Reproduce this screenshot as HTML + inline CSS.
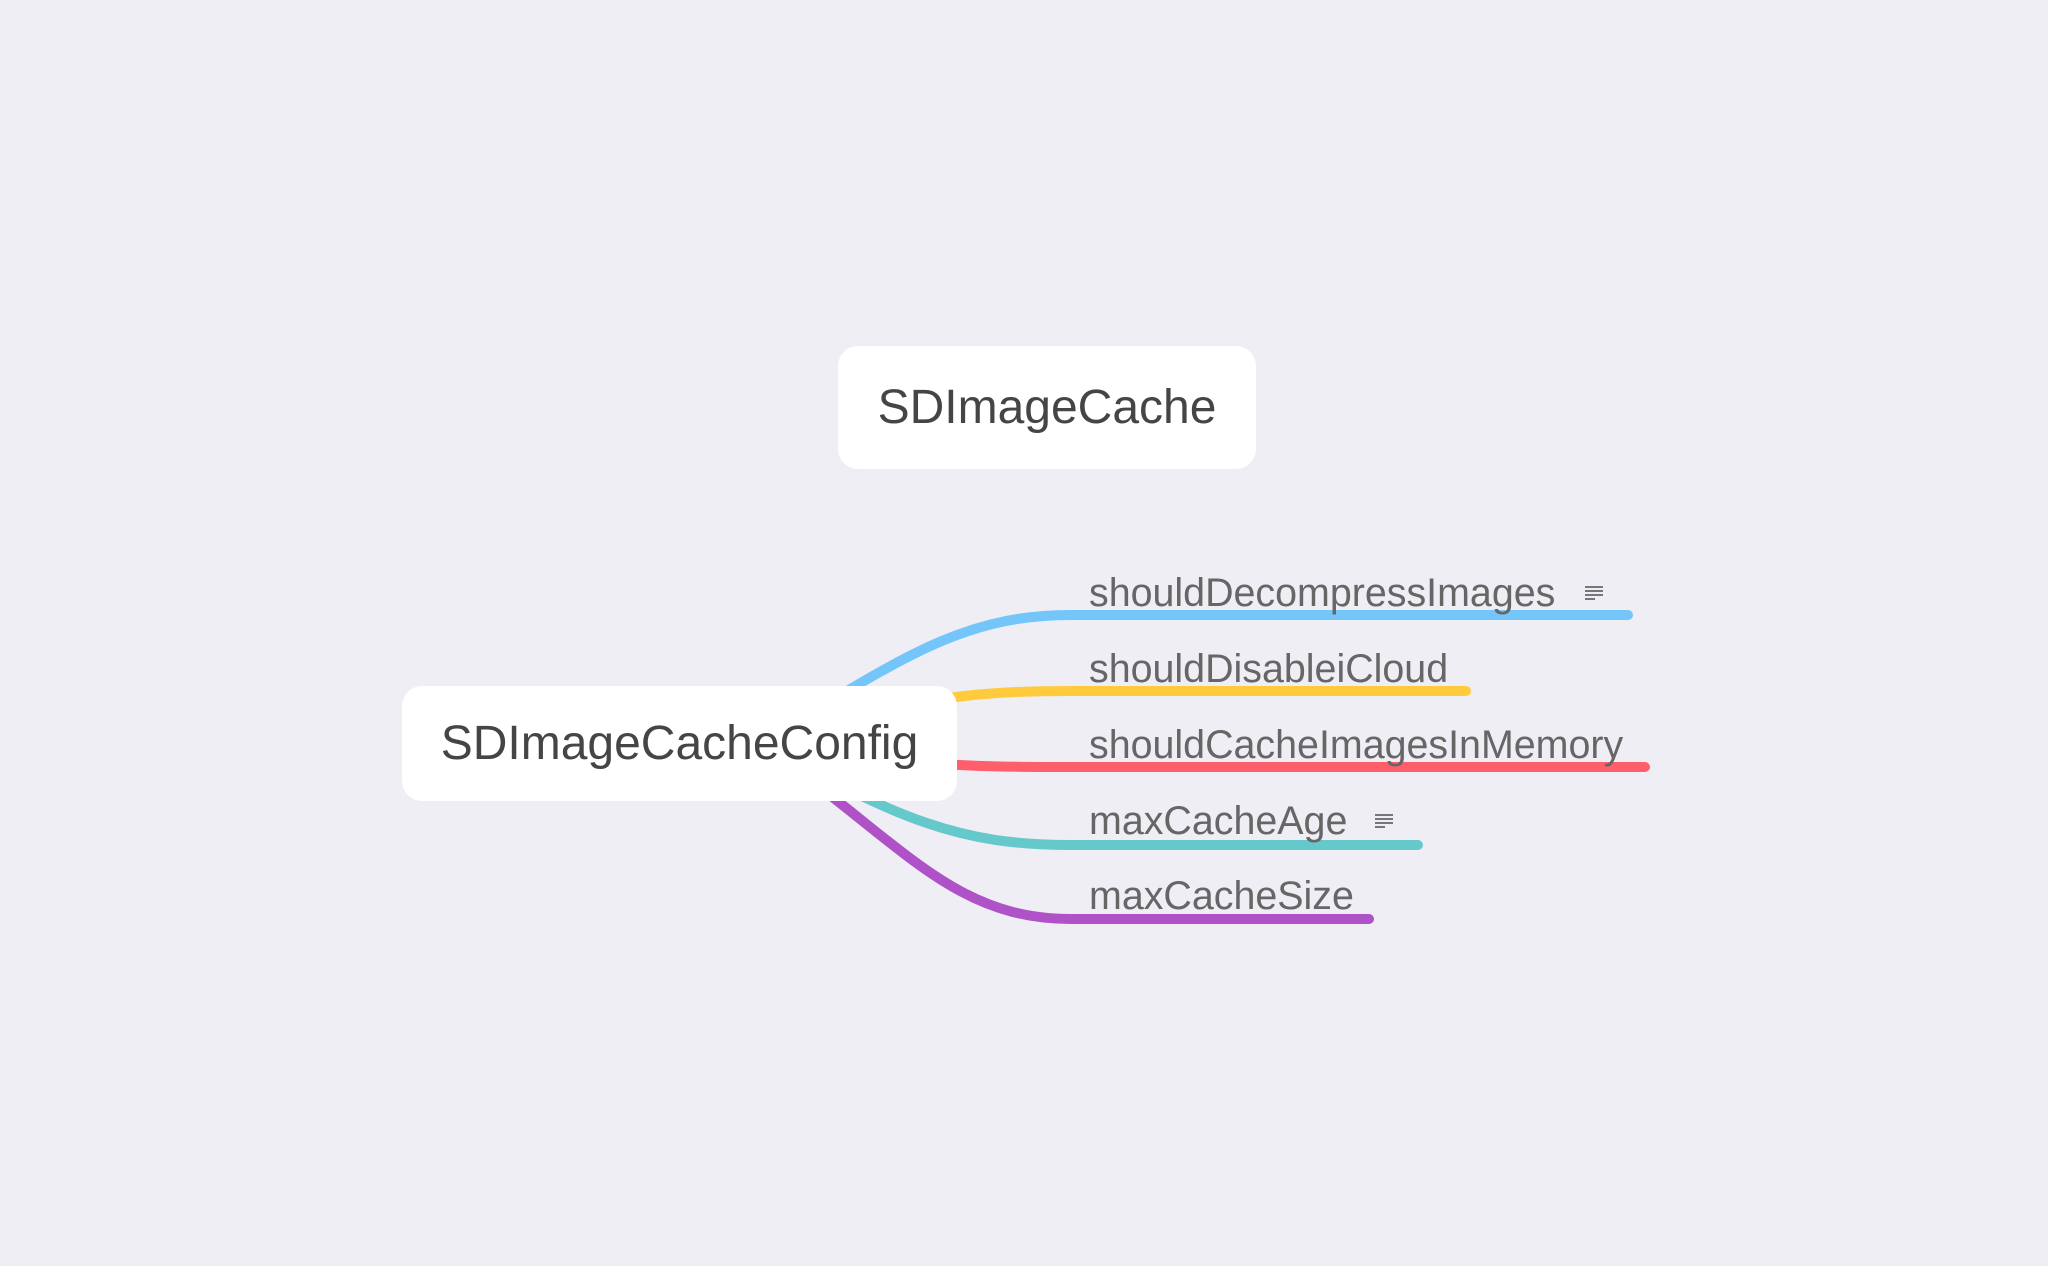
<!DOCTYPE html>
<html><head><meta charset="utf-8"><style>
html,body{margin:0;padding:0}
body{width:2048px;height:1266px;background:#efeef4;position:relative;overflow:hidden;font-family:"Liberation Sans",Arial,sans-serif}
.box{position:absolute;background:#fff;border-radius:20px;color:#454545;font-size:48px;display:flex;align-items:center;justify-content:center}
.t{position:absolute;color:#666;font-size:39.4px;white-space:nowrap;line-height:1}
.ic{position:absolute;width:18px}
.ic i{display:block;height:2px;background:#777;margin-bottom:2px}
</style></head><body>
<svg width="2048" height="1266" style="position:absolute;left:0;top:0" fill="none" stroke-width="10" stroke-linecap="round">
<path d="M760 743 C900 660 960 615 1071 615 L1628 615" stroke="#74c6fa"/>
<path d="M800 743 C900 700 960 691 1071 691 L1466 691" stroke="#ffcb3d"/>
<path d="M800 743 C900 765 960 767 1071 767 L1645 767" stroke="#ff5f6b"/>
<path d="M760 743 C900 820 960 845 1071 845 L1418 845" stroke="#65c9cb"/>
<path d="M760 743 C900 840 950 919 1071 919 L1369 919" stroke="#af52c8"/>
</svg>
<div class="box" style="left:838px;top:346px;width:418px;height:123px">SDImageCache</div>
<div class="box" style="left:402px;top:686px;width:555px;height:115px">SDImageCacheConfig</div>
<div class="t" style="left:1089px;top:574px">shouldDecompressImages</div>
<div class="t" style="left:1089px;top:650px">shouldDisableiCloud</div>
<div class="t" style="left:1089px;top:726px">shouldCacheImagesInMemory</div>
<div class="t" style="left:1089px;top:802px">maxCacheAge</div>
<div class="t" style="left:1089px;top:877px">maxCacheSize</div>
<div class="ic" style="left:1585px;top:586px"><i></i><i></i><i></i><i style="width:10px"></i></div>
<div class="ic" style="left:1375px;top:814px"><i></i><i></i><i></i><i style="width:10px"></i></div>
</body></html>
